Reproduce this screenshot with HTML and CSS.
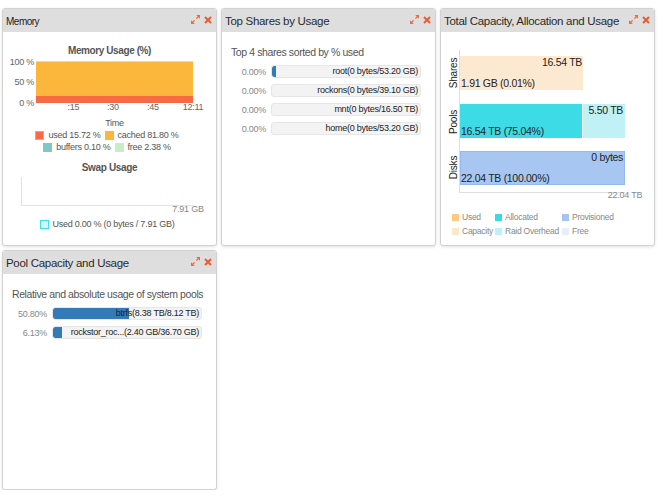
FILE: index.html
```html
<!DOCTYPE html>
<html>
<head>
<meta charset="utf-8">
<link rel="stylesheet" href="styles.css">
</head>
<body>
<main class="board">
  <section class="widget">
    <header class="whead">
      <h2 class="wtitle wtitle-sm">Memory</h2>
      <span class="wicons">
        <svg class="ico" width="9" height="9" viewBox="0 0 9 9"><path d="M1 8 3.6 5.4M5.4 3.6 8 1" stroke="#f06a3c" stroke-width="1.3" fill="none"/><path d="M0 5.2V9h3.8zM9 3.8V0H5.2z" fill="#f06a3c"/></svg>
        <svg class="ico" width="8" height="8" viewBox="0 0 8 8"><path d="M1 1l6 6M7 1 1 7" stroke="#ee5a2e" stroke-width="2"/></svg>
      </span>
    </header>
    <div class="wbody">
      <div class="ctitle">Memory Usage (%)</div>
      <svg class="plot" width="212" height="56" viewBox="0 0 212 56">
        <rect x="33" y="4" width="157" height="1" fill="#c5e8c2"/>
        <rect x="33" y="5" width="157" height="34" fill="#fbb73c"/>
        <rect x="33" y="39" width="157" height="7" fill="#f96a44"/>
        <g class="ylab">
          <text x="31" y="7.5">100 %</text>
          <text x="31" y="28">50 %</text>
          <text x="31" y="48.5">0 %</text>
        </g>
        <g class="xlab">
          <text x="70.5" y="52.5">:15</text>
          <text x="110" y="52.5">:30</text>
          <text x="150" y="52.5">:45</text>
          <text x="190" y="52.5">12:11</text>
        </g>
      </svg>
      <div class="axis-title">Time</div>
      <div class="mlegend">
        <span class="li"><i class="sw sw-used"></i>used 15.72 %</span>
        <span class="li"><i class="sw sw-cached"></i>cached 81.80 %</span>
      </div>
      <div class="mlegend">
        <span class="li"><i class="sw sw-buffers"></i>buffers 0.10 %</span>
        <span class="li"><i class="sw sw-free"></i>free 2.38 %</span>
      </div>
      <div class="ctitle swap-title">Swap Usage</div>
      <svg class="plot" width="212" height="42" viewBox="0 0 212 42">
        <line x1="18.5" y1="3" x2="18.5" y2="31" stroke="#e2e2e2"/>
        <line x1="18" y1="31.5" x2="190" y2="31.5" stroke="#e2e2e2"/>
        <text class="glab" x="185" y="38">7.91 GB</text>
      </svg>
      <div class="mlegend swap-legend">
        <span class="li"><i class="sw sw-swap"></i>Used 0.00 % (0 bytes / 7.91 GB)</span>
      </div>
    </div>
  </section>

  <section class="widget">
    <header class="whead">
      <h2 class="wtitle">Top Shares by Usage</h2>
      <span class="wicons">
        <svg class="ico" width="9" height="9" viewBox="0 0 9 9"><path d="M1 8 3.6 5.4M5.4 3.6 8 1" stroke="#f06a3c" stroke-width="1.3" fill="none"/><path d="M0 5.2V9h3.8zM9 3.8V0H5.2z" fill="#f06a3c"/></svg>
        <svg class="ico" width="8" height="8" viewBox="0 0 8 8"><path d="M1 1l6 6M7 1 1 7" stroke="#ee5a2e" stroke-width="2"/></svg>
      </span>
    </header>
    <div class="wbody">
      <p class="sub">Top 4 shares sorted by % used</p>
      <div class="rows">
        <div class="row"><span class="pct">0.00%</span><div class="bar"><span class="fill" style="width:4px"></span><span class="blabel">root(0 bytes/53.20 GB)</span></div></div>
        <div class="row"><span class="pct">0.00%</span><div class="bar"><span class="fill" style="width:0"></span><span class="blabel">rockons(0 bytes/39.10 GB)</span></div></div>
        <div class="row"><span class="pct">0.00%</span><div class="bar"><span class="fill" style="width:0"></span><span class="blabel">mnt(0 bytes/16.50 TB)</span></div></div>
        <div class="row"><span class="pct">0.00%</span><div class="bar"><span class="fill" style="width:0"></span><span class="blabel">home(0 bytes/53.20 GB)</span></div></div>
      </div>
    </div>
  </section>

  <section class="widget">
    <header class="whead">
      <h2 class="wtitle">Total Capacity, Allocation and Usage</h2>
      <span class="wicons">
        <svg class="ico" width="9" height="9" viewBox="0 0 9 9"><path d="M1 8 3.6 5.4M5.4 3.6 8 1" stroke="#f06a3c" stroke-width="1.3" fill="none"/><path d="M0 5.2V9h3.8zM9 3.8V0H5.2z" fill="#f06a3c"/></svg>
        <svg class="ico" width="8" height="8" viewBox="0 0 8 8"><path d="M1 1l6 6M7 1 1 7" stroke="#ee5a2e" stroke-width="2"/></svg>
      </span>
    </header>
    <div class="wbody">
      <svg class="plot" width="213" height="172" viewBox="0 0 213 172">
        <line x1="18.5" y1="18" x2="18.5" y2="160" stroke="#dedede"/>
        <line x1="18" y1="160.5" x2="184" y2="160.5" stroke="#dedede"/>
        <rect x="19" y="24" width="123" height="34" fill="#fde9d1"/>
        <text class="bt" x="141" y="34" text-anchor="end">16.54 TB</text>
        <text class="bt" x="20" y="55">1.91 GB (0.01%)</text>
        <rect x="19" y="72" width="122" height="34" fill="#3ddbe6"/>
        <rect x="142" y="72" width="42" height="34" fill="#c0f1f5"/>
        <text class="bt" x="182" y="82" text-anchor="end">5.50 TB</text>
        <text class="bt" x="20" y="103">16.54 TB (75.04%)</text>
        <rect x="19.5" y="119.5" width="164" height="33" fill="#a7c7f2" stroke="#94b9ee"/>
        <text class="bt" x="182" y="129" text-anchor="end">0 bytes</text>
        <text class="bt" x="20" y="150">22.04 TB (100.00%)</text>
        <text class="rl" transform="translate(15.5 41) rotate(-90)">Shares</text>
        <text class="rl" transform="translate(15.5 90) rotate(-90)">Pools</text>
        <text class="rl" transform="translate(15.5 135.5) rotate(-90)">Disks</text>
        <text class="glab" x="184" y="165.5">22.04 TB</text>
      </svg>
      <div class="clegend">
        <span class="cl"><i class="csw c-used"></i>Used</span>
        <span class="cl"><i class="csw c-alloc"></i>Allocated</span>
        <span class="cl"><i class="csw c-prov"></i>Provisioned</span>
        <span class="cl"><i class="csw c-cap"></i>Capacity</span>
        <span class="cl"><i class="csw c-raid"></i>Raid Overhead</span>
        <span class="cl"><i class="csw c-free"></i>Free</span>
      </div>
    </div>
  </section>

  <section class="widget">
    <header class="whead">
      <h2 class="wtitle">Pool Capacity and Usage</h2>
      <span class="wicons">
        <svg class="ico" width="9" height="9" viewBox="0 0 9 9"><path d="M1 8 3.6 5.4M5.4 3.6 8 1" stroke="#f06a3c" stroke-width="1.3" fill="none"/><path d="M0 5.2V9h3.8zM9 3.8V0H5.2z" fill="#f06a3c"/></svg>
        <svg class="ico" width="8" height="8" viewBox="0 0 8 8"><path d="M1 1l6 6M7 1 1 7" stroke="#ee5a2e" stroke-width="2"/></svg>
      </span>
    </header>
    <div class="wbody">
      <p class="sub">Relative and absolute usage of system pools</p>
      <div class="rows">
        <div class="row"><span class="pct">50.80%</span><div class="bar"><span class="fill" style="width:76px"></span><span class="blabel">btrfs(8.38 TB/8.12 TB)</span></div></div>
        <div class="row"><span class="pct">6.13%</span><div class="bar"><span class="fill" style="width:9px"></span><span class="blabel">rockstor_roc...(2.40 GB/36.70 GB)</span></div></div>
      </div>
    </div>
  </section>
</main>
</body>
</html>
```

FILE: styles.css
```css
* { box-sizing: border-box; }

body {
  margin: 0;
  background: #fff;
  font-family: "Liberation Sans", Arial, sans-serif;
  color: #333;
}

.board {
  display: grid;
  grid-template-columns: repeat(3, 215px);
  grid-template-rows: 238px 240px;
  column-gap: 4px;
  row-gap: 4px;
  padding: 8px 0 0 2px;
}

.widget {
  display: flex;
  flex-direction: column;
  background: #fff;
  border: 1px solid #d2d2d2;
  border-radius: 3px;
  box-shadow: 0 1px 3px rgba(0, 0, 0, 0.12);
  overflow: hidden;
}

.whead {
  flex: none;
  height: 23px;
  display: flex;
  align-items: center;
  justify-content: space-between;
  padding: 1px 4px 0 3px;
  background: #dedede;
}

.wtitle {
  margin: 0;
  font-size: 11.5px;
  letter-spacing: -0.3px;
  font-weight: normal;
  color: #2a2a2a;
  white-space: nowrap;
}

.wtitle-sm {
  font-size: 10px;
  letter-spacing: -0.5px;
  color: #222;
}

.wicons {
  display: flex;
  align-items: center;
  gap: 4px;
  margin-bottom: 3px;
}

.ico { display: block; }

.wbody {
  flex: 1;
}

.plot { display: block; }

.plot text { font-size: 9px; letter-spacing: -0.25px; fill: #666; }
.plot .ylab text { text-anchor: end; }
.plot .xlab text { text-anchor: middle; }
.plot .glab { text-anchor: middle; fill: #888; }
.plot .bt { font-size: 10.5px; letter-spacing: -0.3px; fill: #222; }
.plot .rl { font-size: 10px; letter-spacing: -0.2px; fill: #222; text-anchor: middle; }

.ctitle {
  margin-top: 12px;
  font-size: 10px;
  letter-spacing: -0.4px;
  font-weight: bold;
  line-height: 13px;
  text-align: center;
  color: #555;
}

.swap-title { margin-top: 8px; letter-spacing: -0.35px; }

.axis-title {
  margin-top: 4px;
  padding-left: 10px;
  font-size: 9px;
  letter-spacing: -0.25px;
  line-height: 12px;
  text-align: center;
  color: #555;
}

.mlegend {
  display: flex;
  justify-content: center;
  gap: 4px;
  padding-right: 5px;
  font-size: 9px;
  letter-spacing: -0.25px;
  line-height: 12px;
  color: #555;
}

.swap-legend { margin-top: 2px; }

.li {
  display: flex;
  align-items: center;
  gap: 4px;
}

.sw {
  display: block;
  width: 9px;
  height: 9px;
}

.sw-used { background: #f96a44; border: 1px solid #f0a18b; }
.sw-cached { background: #fbb73c; }
.sw-buffers { background: #7ccac3; }
.sw-free { background: #c9ecc7; }
.sw-swap { background: #d6f7fa; border: 1.5px solid #3ee0ea; }

.sub {
  margin: 13px 0 6px 9px;
  font-size: 10.5px;
  letter-spacing: -0.4px;
  line-height: 14px;
  color: #555;
  white-space: nowrap;
}

.rows {
  display: flex;
  flex-direction: column;
  gap: 6px;
}

.row {
  display: grid;
  grid-template-columns: 44px 150px;
  column-gap: 5px;
  align-items: center;
}

.pct {
  font-size: 9px;
  letter-spacing: -0.25px;
  color: #888;
  text-align: right;
}

.bar {
  display: grid;
  height: 13px;
  background: #f3f3f3;
  border: 1px solid #e6e6e6;
  border-radius: 3px;
  overflow: hidden;
}

.fill {
  grid-area: 1 / 1;
  background: #337ab7;
  border-radius: 2px 0 0 2px;
}

.blabel {
  grid-area: 1 / 1;
  justify-self: end;
  padding-right: 2px;
  font-size: 9px;
  letter-spacing: -0.25px;
  line-height: 11px;
  color: #222;
  white-space: nowrap;
}

.clegend {
  display: grid;
  grid-template-columns: 43px 67px auto;
  margin: 6px 0 0 11px;
  font-size: 8.5px;
  letter-spacing: -0.25px;
  line-height: 14px;
  color: #888;
}

.cl {
  display: flex;
  align-items: center;
  gap: 3px;
  white-space: nowrap;
}

.csw {
  display: block;
  flex: none;
  width: 7px;
  height: 7px;
}

.c-used { background: #fcc97f; }
.c-alloc { background: #3ad9e4; }
.c-prov { background: #a5c4ef; }
.c-cap { background: #fde7cb; }
.c-raid { background: #c0f0f4; }
.c-free { background: #e6eef9; }
```
